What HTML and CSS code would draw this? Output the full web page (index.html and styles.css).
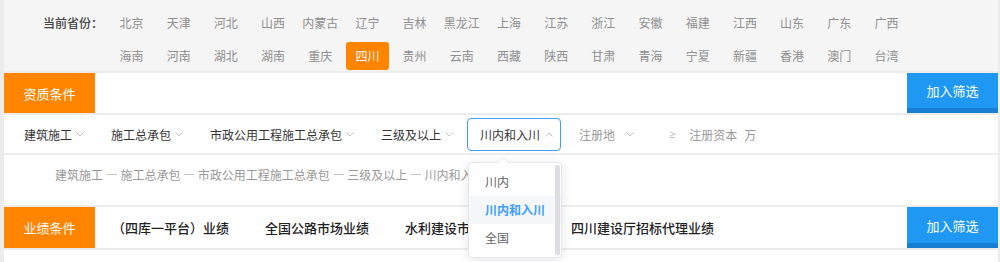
FILE: index.html
```html
<!DOCTYPE html>
<html lang="zh-CN">
<head>
    <meta charset="UTF-8">
    <meta name="viewport" content="width=device-width, initial-scale=1.0">
    <title>筛选条件</title>
    <link rel="stylesheet" href="styles.css">
</head>
<body>
    <div class="page">
        <!-- Province picker -->
        <div class="province-panel">
            <div class="province-label">当前省份：</div>
            <div class="province-grid">
                <span class="province">北京</span>
                <span class="province">天津</span>
                <span class="province">河北</span>
                <span class="province">山西</span>
                <span class="province">内蒙古</span>
                <span class="province">辽宁</span>
                <span class="province">吉林</span>
                <span class="province">黑龙江</span>
                <span class="province">上海</span>
                <span class="province">江苏</span>
                <span class="province">浙江</span>
                <span class="province">安徽</span>
                <span class="province">福建</span>
                <span class="province">江西</span>
                <span class="province">山东</span>
                <span class="province">广东</span>
                <span class="province">广西</span>
                <span class="province">海南</span>
                <span class="province">河南</span>
                <span class="province">湖北</span>
                <span class="province">湖南</span>
                <span class="province">重庆</span>
                <span class="province active">四川</span>
                <span class="province">贵州</span>
                <span class="province">云南</span>
                <span class="province">西藏</span>
                <span class="province">陕西</span>
                <span class="province">甘肃</span>
                <span class="province">青海</span>
                <span class="province">宁夏</span>
                <span class="province">新疆</span>
                <span class="province">香港</span>
                <span class="province">澳门</span>
                <span class="province">台湾</span>
            </div>
        </div>

        <!-- Qualification bar -->
        <div class="bar">
            <div class="bar-title">资质条件</div>
            <div class="bar-body"></div>
            <button class="bar-btn">加入筛选</button>
        </div>

        <div class="filter-row">
            <div class="filter-item">建筑施工
                <svg class="chev" viewBox="0 0 8 5"><path d="M0.5 0.5 L4 4 L7.5 0.5"/></svg>
            </div>
            <div class="filter-item">施工总承包
                <svg class="chev" viewBox="0 0 8 5"><path d="M0.5 0.5 L4 4 L7.5 0.5"/></svg>
            </div>
            <div class="filter-item">市政公用工程施工总承包
                <svg class="chev" viewBox="0 0 8 5"><path d="M0.5 0.5 L4 4 L7.5 0.5"/></svg>
            </div>
            <div class="filter-item tight">三级及以上
                <svg class="chev" viewBox="0 0 8 5"><path d="M0.5 0.5 L4 4 L7.5 0.5"/></svg>
            </div>

            <div class="select">
                <span>川内和入川</span>
                <svg class="chev" viewBox="0 0 8 5"><path d="M0.5 4.5 L4 1 L7.5 4.5"/></svg>

                <div class="dropdown">
                    <span class="dd-arrow"></span>
                    <div class="dd-item">川内</div>
                    <div class="dd-item selected">川内和入川</div>
                    <div class="dd-item">全国</div>
                    <span class="dd-scroll"></span>
                </div>
            </div>

            <div class="filter-item placeholder">注册地
                <svg class="chev" viewBox="0 0 8 5"><path d="M0.5 0.5 L4 4 L7.5 0.5"/></svg>
            </div>
            <div class="capital">
                <span class="ge">≥</span>
                <span>注册资本</span>
                <span class="unit">万</span>
            </div>
        </div>

        <div class="crumbs">建筑施工 — 施工总承包 — 市政公用工程施工总承包 — 三级及以上 — 川内和入川</div>

        <!-- Performance bar -->
        <div class="bar bar-perf">
            <div class="bar-title">业绩条件</div>
            <div class="bar-body tabs">
                <span>（四库一平台）业绩</span>
                <span>全国公路市场业绩</span>
                <span>水利建设市场监管业绩</span>
                <span>四川建设厅招标代理业绩</span>
            </div>
            <button class="bar-btn">加入筛选</button>
        </div>

        <div class="next-block"></div>
    </div>
</body>
</html>
```

FILE: styles.css
```css
body {
    margin: 0;
    height: 262px;
    overflow: hidden;
    background: #ececec;
    font-family: "Noto Sans CJK SC", "Liberation Sans", sans-serif;
    font-size: 12px;
    color: #333;
}

.page {
    margin-left: 4px;
    width: 994px;
    display: flex;
    flex-direction: column;
    gap: 2px;
}

/* province picker */
.province-panel {
    background: #f5f5f5;
    height: 71px;
    box-sizing: border-box;
    padding: 9px 0 0 39px;
    display: flex;
}

.province-label {
    width: 67px;
    line-height: 28px;
    color: #444;
    font-weight: 500;
}

.province-grid {
    display: grid;
    grid-template-columns: repeat(17, 43px);
    column-gap: 4.2px;
    row-gap: 4px;
}

.province {
    height: 28px;
    line-height: 28px;
    text-align: center;
    color: #8f8f8f;
    border-radius: 3px;
    white-space: nowrap;
}

.province.active {
    background: #ff8400;
    color: #fff;
}

/* orange / blue bars */
.bar {
    display: flex;
    height: 40px;
    background: #fff;
}

.bar-perf {
    height: 41px;
}

.bar-title {
    width: 91px;
    background: #ff8400;
    color: #fff;
    font-size: 13px;
    display: flex;
    align-items: center;
    justify-content: center;
}

.bar-body {
    flex: 1;
}

.bar-btn {
    width: 91px;
    padding: 0;
    border: none;
    border-bottom: 5px solid #167fd3;
    background: #1e98f2;
    color: #fff;
    font-family: inherit;
    font-size: 13px;
}

.tabs {
    display: flex;
    align-items: center;
    gap: 36px;
    padding-left: 17px;
    font-size: 13px;
    font-weight: 500;
    color: #222;
    white-space: nowrap;
}

/* filter row */
.filter-row {
    position: relative;
    z-index: 2;
    height: 38px;
    background: #fff;
    display: flex;
    align-items: center;
    padding-left: 20px;
}

.filter-item {
    display: flex;
    align-items: center;
    gap: 4px;
    margin-right: 27px;
    white-space: nowrap;
}

.filter-item.tight {
    margin-right: 14px;
}

.filter-item.placeholder {
    color: #999;
    gap: 11px;
    margin-left: 18px;
    margin-right: 0;
}

.chev {
    width: 8px;
    height: 5px;
    fill: none;
    stroke: #c0c4cc;
    stroke-width: 1;
}

.select {
    position: relative;
    width: 94px;
    height: 33px;
    box-sizing: border-box;
    border: 1px solid #409eff;
    border-radius: 4px;
    padding-left: 12px;
    display: flex;
    align-items: center;
    gap: 5px;
    white-space: nowrap;
}

.dropdown {
    position: absolute;
    left: 0;
    top: calc(100% + 12px);
    width: 94px;
    box-sizing: border-box;
    padding: 5px 0;
    background: #fff;
    border: 1px solid #e4e7ed;
    border-radius: 4px;
    box-shadow: 0 2px 12px rgba(0, 0, 0, 0.1);
    z-index: 10;
}

.dd-arrow {
    position: absolute;
    top: -6px;
    left: 28px;
    width: 0;
    height: 0;
    border-style: solid;
    border-width: 0 6px 6px;
    border-color: transparent transparent #e4e7ed;
}

.dd-arrow::after {
    content: "";
    position: absolute;
    top: 1px;
    left: -5px;
    border-style: solid;
    border-width: 0 5px 5px;
    border-color: transparent transparent #fff;
}

.dd-item {
    height: 28px;
    line-height: 28px;
    padding-left: 16px;
    color: #606266;
}

.dd-item.selected {
    color: #409eff;
    font-weight: bold;
    background: #f5f7fa;
}

.dd-scroll {
    position: absolute;
    right: 1px;
    top: 2px;
    bottom: 2px;
    width: 5px;
    border-radius: 3px;
    background: #dcdde0;
}

.capital {
    display: flex;
    align-items: center;
    margin-left: 35px;
    color: #999;
    white-space: nowrap;
}

.capital .ge {
    font-family: "Liberation Sans", sans-serif;
    font-size: 11px;
    color: #bbb;
    margin-right: 14px;
}

.capital .unit {
    margin-left: 7px;
}

/* breadcrumb */
.crumbs {
    height: 50px;
    box-sizing: border-box;
    padding: 13px 0 0 51px;
    line-height: 14px;
    background: #fff;
    color: #999;
    white-space: nowrap;
}

.next-block {
    height: 20px;
    background: #fff;
}
```
